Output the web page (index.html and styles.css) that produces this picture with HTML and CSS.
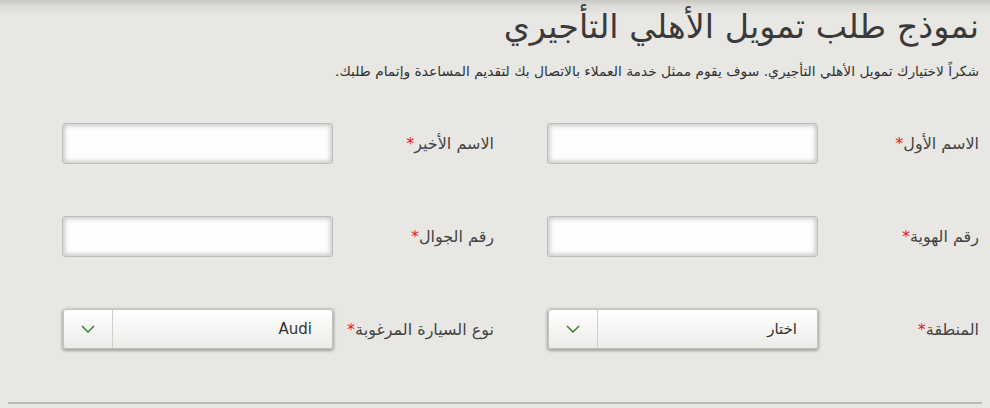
FILE: index.html
```html
<!DOCTYPE html>
<html lang="ar" dir="rtl">
    <head>
        <title>نموذج طلب تمويل الأهلي التأجيري</title>
        <meta charset="utf-8">
        <meta name="viewport" content="width=device-width, initial-scale=1.0">
        <link rel="stylesheet" href="styles.css">
    </head>
    <body>
        <div class="page">
            <h1 class="form-title">نموذج طلب تمويل الأهلي التأجيري</h1>
            <p class="form-intro">شكراً لاختيارك تمويل الأهلي التأجيري. سوف يقوم ممثل خدمة العملاء بالاتصال بك لتقديم المساعدة وإتمام طلبك.</p>

            <form class="lease-form">
                <div class="form-row">
                    <div class="field">
                        <label for="firstName">الاسم الأول<span class="req">*</span></label>
                        <input type="text" id="firstName" class="text-input">
                    </div>
                    <div class="field">
                        <label for="lastName">الاسم الأخير<span class="req">*</span></label>
                        <input type="text" id="lastName" class="text-input">
                    </div>
                </div>
                <div class="form-row">
                    <div class="field">
                        <label for="nationalId">رقم الهوية<span class="req">*</span></label>
                        <input type="text" id="nationalId" class="text-input">
                    </div>
                    <div class="field">
                        <label for="mobile">رقم الجوال<span class="req">*</span></label>
                        <input type="text" id="mobile" class="text-input">
                    </div>
                </div>
                <div class="form-row">
                    <div class="field">
                        <label for="region">المنطقة<span class="req">*</span></label>
                        <div class="select-wrap">
                            <select id="region" class="select-input">
                                <option>اختار</option>
                            </select>
                            <span class="select-arrow">
                                <svg width="14" height="8" viewBox="0 0 14 8"><path d="M1 1 L7 7 L13 1" fill="none" stroke="#2f7a22" stroke-width="1.4"/></svg>
                            </span>
                        </div>
                    </div>
                    <div class="field">
                        <label for="carType">نوع السيارة المرغوبة<span class="req">*</span></label>
                        <div class="select-wrap">
                            <select id="carType" class="select-input">
                                <option>Audi</option>
                            </select>
                            <span class="select-arrow">
                                <svg width="14" height="8" viewBox="0 0 14 8"><path d="M1 1 L7 7 L13 1" fill="none" stroke="#2f7a22" stroke-width="1.4"/></svg>
                            </span>
                        </div>
                    </div>
                </div>
            </form>

            <div class="form-divider"></div>
        </div>
    </body>
</html>
```

FILE: styles.css
```css
html, body {
    margin: 0;
    padding: 0;
}
body {
    background: #e8e7e3 linear-gradient(to bottom, #c8c7c3 0px, #dcdbd7 6px, #e8e7e3 16px) no-repeat;
    font-family: "DejaVu Sans", sans-serif;
    color: #333;
}
.page {
    padding: 0 11px 0 11px;
}
.form-title {
    margin: 0;
    padding-top: 4px;
    font-size: 33.4px;
    font-weight: normal;
    line-height: 46px;
    color: #3a3a3a;
}
.form-intro {
    margin: 12px 0 0 0;
    font-size: 13.8px;
    line-height: 18px;
    color: #333;
}
.lease-form {
    margin-top: 43px;
}
.form-row {
    display: flex;
    margin-bottom: 52px;
}
.form-row:last-child {
    margin-bottom: 53px;
}
.field {
    display: flex;
    align-items: center;
    width: 485px;
    flex: none;
}
.field label {
    width: 161px;
    flex: none;
    font-size: 16px;
    color: #444;
}
.req {
    color: #e41b1b;
}
.text-input {
    flex: none;
    width: 271px;
    height: 41px;
    box-sizing: border-box;
    border: 1px solid #bdbdb9;
    border-radius: 3px;
    background: #fdfdfd;
    box-shadow: inset 0 0 4px 2px rgba(0, 0, 0, 0.2);
    outline: none;
}
.select-wrap {
    position: relative;
    flex: none;
    width: 270px;
    height: 40px;
}
.select-input {
    appearance: none;
    -webkit-appearance: none;
    width: 100%;
    height: 100%;
    box-sizing: border-box;
    border: 1px solid #c2c2be;
    border-radius: 3px;
    background: linear-gradient(to bottom, #ffffff, #ebebe9);
    box-shadow: 0 1px 3px 1px rgba(0, 0, 0, 0.3);
    padding: 0 20px 0 50px;
    font-family: "DejaVu Sans", sans-serif;
    font-size: 15px;
    color: #333;
    outline: none;
}
.select-arrow {
    position: absolute;
    left: 1px;
    top: 1px;
    bottom: 1px;
    width: 48px;
    border-right: 1px solid #cfcfcb;
    display: flex;
    align-items: center;
    justify-content: center;
    pointer-events: none;
}
.form-divider {
    margin: 0 -3px;
    height: 0;
    border-top: 2px solid #bcbcb8;
}
```
